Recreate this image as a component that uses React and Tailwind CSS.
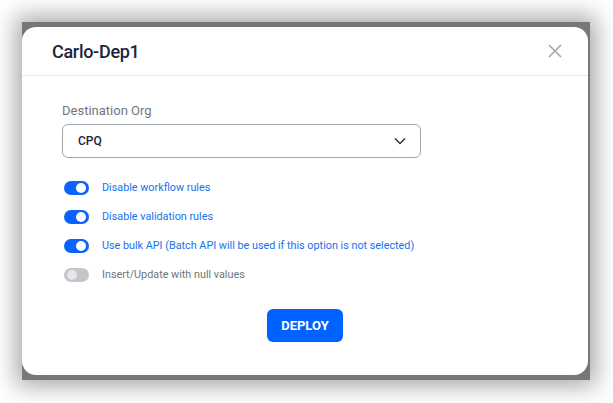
import React from 'react';

const options = [
  { label: 'Disable workflow rules', on: true },
  { label: 'Disable validation rules', on: true },
  { label: 'Use bulk API (Batch API will be used if this option is not selected)', on: true },
  { label: 'Insert/Update with null values', on: false },
];

const Toggle = ({ on }) => (
  <span
    className={`relative inline-flex w-[25px] h-[14px] rounded-full shrink-0 ${on ? 'bg-[#0a62ff]' : 'bg-[#c4c6cb]'}`}
  >
    <span
      className={`absolute top-[2px] w-[10px] h-[10px] rounded-full ${on ? 'right-[3px] bg-white' : 'left-[3px] bg-[#e6e7ea]'}`}
    />
  </span>
);

export default function App() {
  return (
    <div className="w-[613px] h-[403px] bg-white pl-[22px] pt-[22px] font-['Roboto',sans-serif]">
      <div className="w-[568px] h-[358px] bg-[#777] pt-[5px] shadow-[0_0_22px_6px_rgba(0,0,0,0.35)]">
        <div className="w-[566px] h-[348px] bg-white rounded-[14px] flex flex-col">
          {/* Header */}
          <div className="h-[49px] flex items-center justify-between pl-[30px] pr-[26px] border-b border-[#e6e8eb]">
            <h2 className="text-[18px] font-medium text-[#1b2540] tracking-[-0.3px]">Carlo-Dep1</h2>
            <svg width="14" height="14" viewBox="0 0 14 14" className="text-[#9aa6ad]">
              <path d="M1 1L13 13M13 1L1 13" stroke="currentColor" strokeWidth="1.5" />
            </svg>
          </div>
          {/* Body */}
          <div className="pl-[40px] pr-[167px] pt-[25px]">
            <label className="block text-[13px] leading-[20px] text-[#707780]">Destination Org</label>
            <div className="mt-[3px] h-[34px] border border-[#a0a6ae] rounded-[6px] flex items-center justify-between pl-[15px] pr-[14px]">
              <span className="text-[12px] font-medium text-[#1b2540]">CPQ</span>
              <svg width="12" height="8" viewBox="0 0 12 8" className="text-[#2b3345]">
                <path d="M1 1.5L6 6.5L11 1.5" fill="none" stroke="currentColor" strokeWidth="1.5" />
              </svg>
            </div>
            <div className="mt-[23px] flex flex-col gap-[15px] pl-[2px]">
              {options.map((o) => (
                <div key={o.label} className="flex items-center h-[14px]">
                  <Toggle on={o.on} />
                  <span className={`ml-[13px] text-[10.8px] whitespace-nowrap ${o.on ? 'text-[#1670f0]' : 'text-[#6f747b]'}`}>
                    {o.label}
                  </span>
                </div>
              ))}
            </div>
          </div>
          <div className="flex justify-center mt-[27px]">
            <button className="w-[76px] h-[33px] bg-[#0062ff] rounded-[6px] text-white text-[13px] font-bold">
              DEPLOY
            </button>
          </div>
        </div>
      </div>
    </div>
  );
}
